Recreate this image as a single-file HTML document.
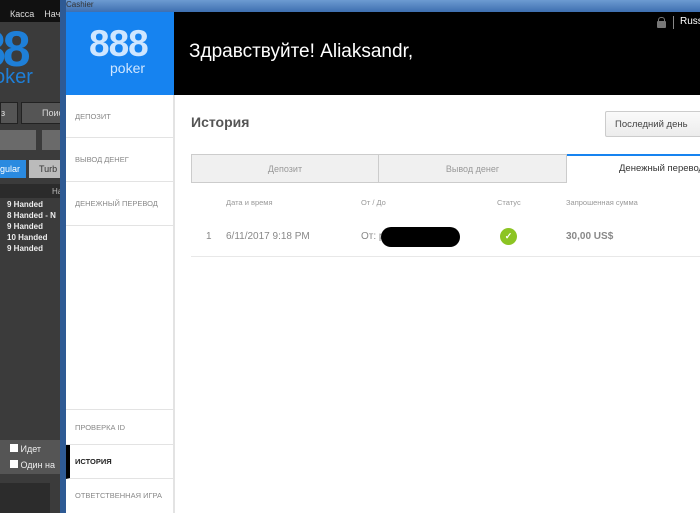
<!DOCTYPE html>
<html><head><meta charset="utf-8"><style>
*{margin:0;padding:0;box-sizing:border-box}
body{width:700px;height:513px;overflow:hidden;background:#3b3b3b;font-family:"Liberation Sans",sans-serif;position:relative}
.a{position:absolute}
.side div{position:absolute;left:0;width:107px;font-size:7.5px;color:#888;padding-left:9px;border-bottom:1px solid #e3e3e3}
</style></head><body>
<!-- background app -->
<div class="a" style="left:0;top:0;width:62px;height:22px;background:#111"></div>
<div class="a" style="left:10px;top:9px;font-size:9px;color:#ddd">Касса&nbsp;&nbsp;&nbsp;&nbsp;Нача</div>
<div class="a" style="left:-22px;top:20px;font-size:50px;font-weight:bold;color:#1e7fd8;letter-spacing:-3px">88</div>
<div class="a" style="left:-6px;top:66px;font-size:20px;color:#1e7fd8">oker</div>
<div class="a" style="left:0;top:102px;width:18px;height:22px;background:#555;border:1px solid #222;color:#ddd;font-size:9px;padding:5px 0 0 0">з</div>
<div class="a" style="left:21px;top:102px;width:41px;height:22px;background:#555;border:1px solid #222;color:#ddd;font-size:9px;padding:5px 0 0 20px">Поис</div>
<div class="a" style="left:0;top:130px;width:36px;height:20px;background:#6a6a6a"></div>
<div class="a" style="left:42px;top:130px;width:20px;height:20px;background:#6a6a6a"></div>
<div class="a" style="left:0;top:160px;width:26px;height:18px;background:#2a8ae0;color:#fff;font-size:9px;padding:4px 0 0 0">gular</div>
<div class="a" style="left:29px;top:160px;width:33px;height:18px;background:#bbb;color:#333;font-size:9px;padding:4px 0 0 10px">Turb</div>
<div class="a" style="left:0;top:184px;width:62px;height:14px;background:#2b2b2b;color:#bbb;font-size:8px;padding:3px 0 0 52px">На</div>
<div class="a" style="left:7px;top:199px;font-size:8px;font-weight:bold;color:#eee;line-height:11px">9 Handed<br>8 Handed - N<br>9 Handed<br>10 Handed<br>9 Handed</div>
<div class="a" style="left:0;top:440px;width:62px;height:34px;background:#555"></div>
<div class="a" style="left:10px;top:444px;font-size:9px;color:#eee"><span style="display:inline-block;width:8px;height:8px;background:#fff"></span> Идет</div>
<div class="a" style="left:10px;top:460px;font-size:9px;color:#eee"><span style="display:inline-block;width:8px;height:8px;background:#fff"></span> Один на</div>
<div class="a" style="left:0;top:483px;width:50px;height:30px;background:#2c2c2c"></div>
<!-- cashier window -->
<div class="a" style="left:60px;top:0;width:640px;height:12px;background:linear-gradient(#6d9bd1,#3e6fb0)"></div>
<div class="a" style="left:66px;top:0;font-size:8px;color:#333">Cashier</div>
<div class="a" style="left:60px;top:0;width:6px;height:513px;background:#2e5a94"></div>
<div class="a" style="left:66px;top:12px;width:634px;height:83px;background:#000"></div>
<div class="a" style="left:66px;top:12px;width:108px;height:83px;background:#1683f0"></div>
<div class="a" style="left:89px;top:25px;font-size:37px;font-weight:bold;color:#cfe6ff;letter-spacing:-1px;line-height:37px">888</div>
<div class="a" style="left:110px;top:60px;font-size:14px;color:#cfe6ff">poker</div>
<div class="a" style="left:189px;top:41px;font-size:19px;color:#fff">Здравствуйте! Aliaksandr,</div>
<div class="a" style="left:658px;top:17px;width:7px;height:10px;border:1.5px solid #777;border-radius:3px 3px 0 0;border-bottom:none;height:5px"></div>
<div class="a" style="left:657px;top:21px;width:9px;height:7px;background:#777;border-radius:1px"></div>
<div class="a" style="left:673px;top:16px;width:1px;height:13px;background:#888"></div>
<div class="a" style="left:680px;top:16px;font-size:10px;color:#fff">Russ</div>
<!-- sidebar -->
<div class="a side" style="left:66px;top:95px;width:108px;height:418px;background:#fff;border-right:1px solid #e3e3e3">
<div style="top:0;height:43px;padding-top:17px">ДЕПОЗИТ</div>
<div style="top:43px;height:44px;padding-top:17px">ВЫВОД ДЕНЕГ</div>
<div style="top:87px;height:44px;padding-top:17px">ДЕНЕЖНЫЙ ПЕРЕВОД</div>
<div style="top:131px;height:184px"></div>
<div style="top:315px;height:35px;padding-top:13px">ПРОВЕРКА ID</div>
<div style="top:350px;height:34px;padding-top:12px;color:#222;font-weight:bold;border-left:4px solid #000;padding-left:5px">ИСТОРИЯ</div>
<div style="top:384px;height:34px;padding-top:12px;border-bottom:none">ОТВЕТСТВЕННАЯ ИГРА</div>
</div>
<!-- main -->
<div class="a" style="left:174px;top:95px;width:526px;height:418px;background:#fff;border-left:1px solid #e3e3e3"></div>
<div class="a" style="left:191px;top:114px;font-size:14px;font-weight:bold;color:#555">История</div>
<div class="a" style="left:605px;top:111px;width:100px;height:26px;border:1px solid #ccc;border-radius:2px;background:linear-gradient(#fafafa,#ececec);font-size:9.5px;color:#444;padding:7px 0 0 9px">Последний день</div>
<div class="a" style="left:191px;top:154px;width:188px;height:29px;background:#f0f0f0;border:1px solid #ccc;font-size:9px;color:#999;text-align:center;padding-top:9px">Депозит</div>
<div class="a" style="left:379px;top:154px;width:188px;height:29px;background:#f0f0f0;border:1px solid #ccc;border-left:none;font-size:9px;color:#999;text-align:center;padding-top:9px">Вывод денег</div>
<div class="a" style="left:567px;top:154px;width:140px;height:29px;border-top:2px solid #1683f0;font-size:9.5px;color:#333;padding:7px 0 0 52px;white-space:nowrap">Денежный перевод</div>
<div class="a" style="left:226px;top:198px;font-size:7.5px;color:#999">Дата и время</div>
<div class="a" style="left:361px;top:198px;font-size:7.5px;color:#999">От / До</div>
<div class="a" style="left:497px;top:198px;font-size:7.5px;color:#999">Статус</div>
<div class="a" style="left:566px;top:198px;font-size:7.5px;color:#999">Запрошенная сумма</div>
<div class="a" style="left:206px;top:231px;font-size:10px;color:#888">1</div>
<div class="a" style="left:226px;top:231px;font-size:10px;color:#888">6/11/2017 9:18 PM</div>
<div class="a" style="left:361px;top:231px;font-size:10px;color:#888">От: р</div>
<div class="a" style="left:381px;top:227px;width:79px;height:20px;background:#000;border-radius:10px"></div>
<div class="a" style="left:500px;top:228px;width:17px;height:17px;background:#8cc423;border-radius:50%;color:#fff;font-size:9px;text-align:center;line-height:17px;font-weight:bold">✓</div>
<div class="a" style="left:566px;top:231px;font-size:10px;font-weight:bold;color:#888">30,00 US$</div>
<div class="a" style="left:191px;top:256px;width:509px;height:1px;background:#e8e8e8"></div>
</body></html>
